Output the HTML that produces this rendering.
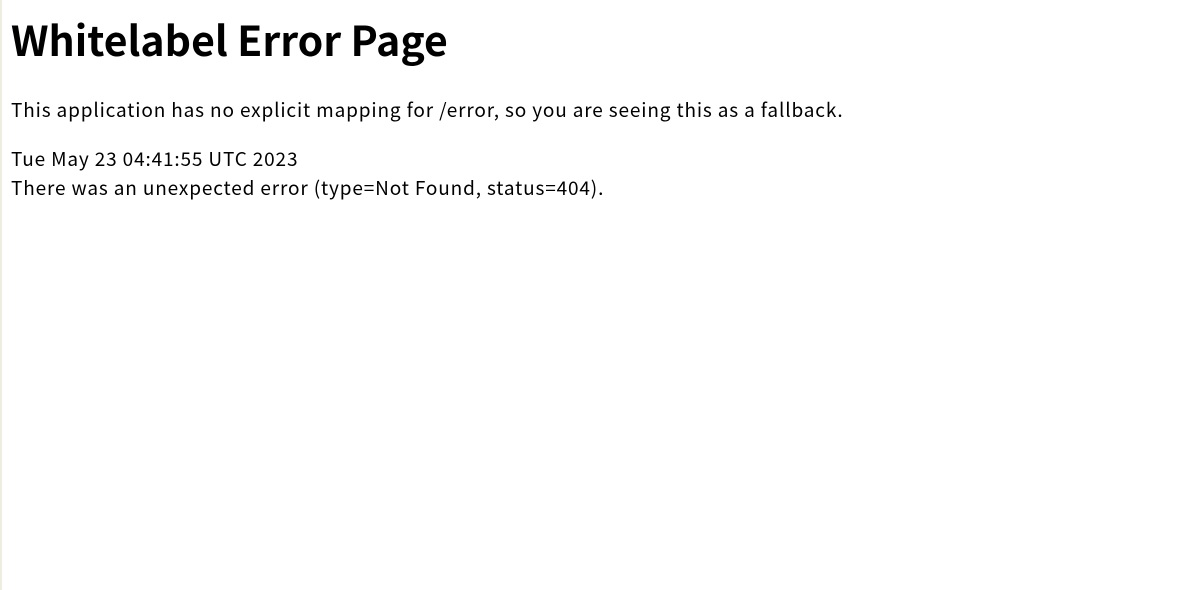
<!DOCTYPE html>
<html><head><meta charset="utf-8"><style>
html,body{margin:0;padding:0;background:#fff;width:1200px;height:590px;overflow:hidden}
body{font-family:"Noto Sans CJK KR","NanumGothic","Liberation Sans",sans-serif;color:#000;position:relative}
.edge{position:absolute;left:0;top:0;width:2px;height:590px;background:#eeeee0}
h1{position:absolute;left:11px;top:8px;margin:0;font-size:41px;font-weight:bold;line-height:60px;letter-spacing:0}
p{position:absolute;left:11px;margin:0;font-size:19px;line-height:29px;white-space:nowrap;letter-spacing:0.85px}
</style></head><body>
<div class="edge"></div>
<h1>Whitelabel Error Page</h1>
<p style="top:95px">This application has no explicit mapping for /error, so you are seeing this as a fallback.</p>
<p style="top:144px">Tue May 23 04:41:55 UTC 2023<br>There was an unexpected error (type=Not Found, status=404).</p>
</body></html>
